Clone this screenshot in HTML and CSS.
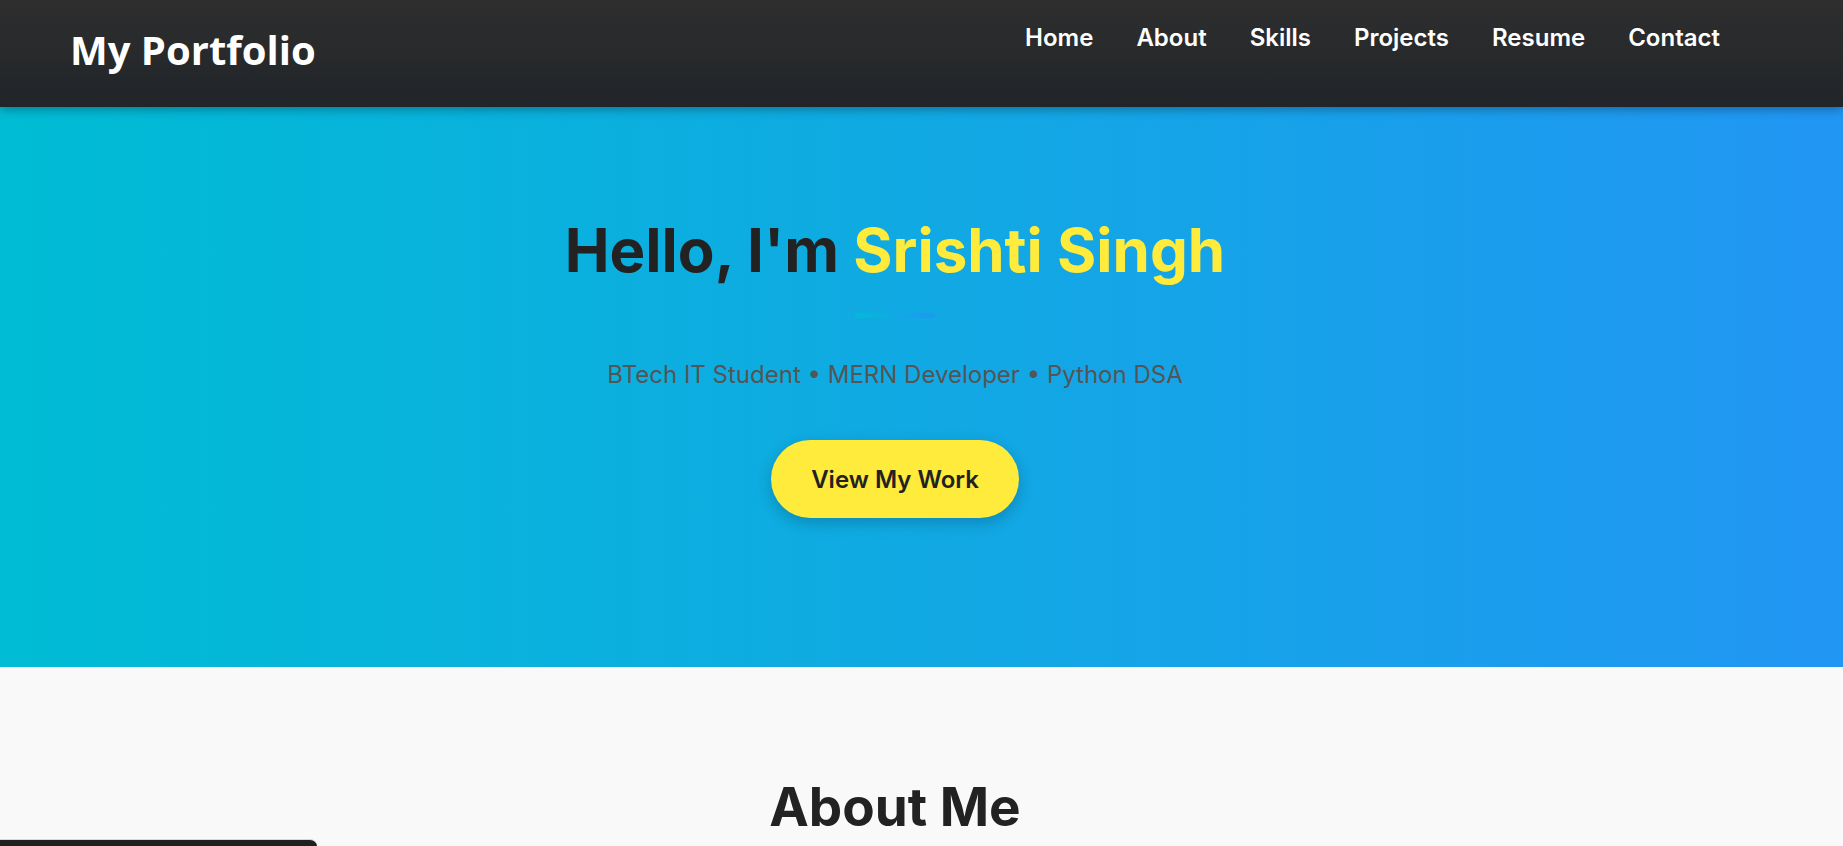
FILE: index.html
```html
<!DOCTYPE html>
<html lang="en">
<head>
<meta charset="UTF-8">
<title>My Portfolio</title>
<link rel="stylesheet" href="styles.css">
</head>
<body>
<header class="site-header">
  <div class="logo">My Portfolio</div>
  <nav class="nav">
    <a href="#home">Home</a>
    <a href="#about">About</a>
    <a href="#skills">Skills</a>
    <a href="#projects">Projects</a>
    <a href="#resume">Resume</a>
    <a href="#contact">Contact</a>
  </nav>
</header>
<section class="hero" id="home">
  <h1 class="hero-title">Hello, I'm <span class="name">Srishti Singh</span></h1>
  <div class="divider"></div>
  <p class="hero-sub">BTech IT Student • MERN Developer • Python DSA</p>
  <a class="btn" href="#projects">View My Work</a>
</section>
<section class="about" id="about">
  <h2 class="section-title">About Me</h2>
</section>
<div class="toast"></div>
</body>
</html>
```
FILE: styles.css
```css
* { box-sizing: border-box; }
html, body { margin: 0; padding: 0; }
body {
  font-family: Inter, "Noto Sans", sans-serif;
  background: #f9f9f9;
  color: #222;
  overflow: hidden;
}
.site-header {
  height: 107px;
  display: flex;
  justify-content: space-between;
  align-items: center;
  padding: 0 123px 0 70px;
  background: linear-gradient(180deg, #2e2e2e 0%, #212529 100%);
  box-shadow: 0 2px 10px rgba(0,0,0,0.35);
  position: relative;
  z-index: 2;
}
.logo {
  font-family: "Open Sans", sans-serif;
  font-weight: 700;
  font-size: 40px;
  line-height: 48px;
  color: #fff;
  padding-bottom: 7px;
}
.nav {
  display: flex;
  gap: 43px;
  padding-bottom: 33px;
}
.nav a {
  color: #fff;
  text-decoration: none;
  font-weight: 600;
  font-size: 24px;
  line-height: 29px;
}
.hero {
  height: 560px;
  background: linear-gradient(90deg, #00bcd4 0%, #2196f3 100%);
  display: flex;
  flex-direction: column;
  align-items: center;
  padding: 105px 53px 0 0;
}
.hero-title {
  margin: 0;
  font-size: 60px;
  line-height: 77px;
  font-weight: 700;
  color: #222;
}
.name { color: #ffeb3b; }
.divider {
  width: 80px;
  height: 5px;
  border-radius: 3px;
  margin-top: 24px;
  background: linear-gradient(90deg, #00bcd4, #2196f3);
}
.hero-sub {
  margin: 40px 0 0;
  font-size: 24px;
  line-height: 34px;
  color: #555;
}
.btn {
  margin-top: 48px;
  display: inline-block;
  padding: 24.5px 40px;
  border-radius: 40px;
  background: #ffeb3b;
  color: #222;
  font-weight: 600;
  font-size: 24px;
  line-height: 29px;
  text-decoration: none;
  box-shadow: 0 5px 15px rgba(0,0,0,0.2);
}
.about {
  padding: 108px 53px 0 0;
  text-align: center;
  background: #f9f9f9;
}
.section-title {
  margin: 0;
  font-size: 53px;
  line-height: 64px;
  font-weight: 700;
  color: #222;
}
.toast {
  position: fixed;
  left: 0;
  bottom: -33px;
  width: 317px;
  height: 40px;
  background: #1f2020;
  border-top: 1px solid #d8d8d8;
  border-top-right-radius: 7px;
}
```
